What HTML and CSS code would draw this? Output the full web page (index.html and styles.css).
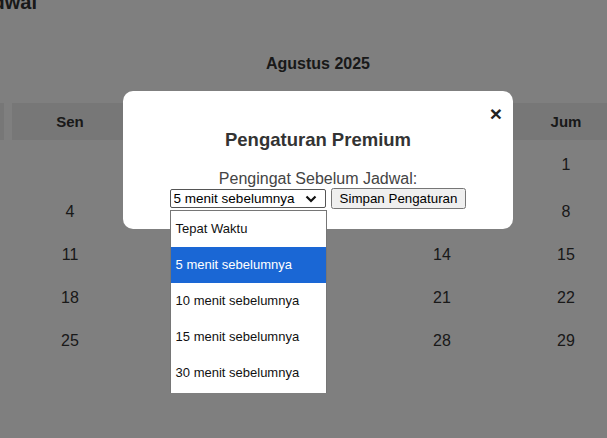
FILE: index.html
```html
<!DOCTYPE html>
<html lang="id">
<head>
    <meta charset="UTF-8">
    <meta name="viewport" content="width=device-width, initial-scale=1.0">
    <title>Aplikasi Jadwal</title>
    <link rel="stylesheet" href="styles.css">
</head>
<body>

<div class="page">
    <h1 class="app-title">Aplikasi Jadwal</h1>
    <h2 class="month-title">Agustus 2025</h2>

    <div class="calendar">
        <div class="day-name">Min</div>
        <div class="day-name">Sen</div>
        <div class="day-name">Sel</div>
        <div class="day-name">Rab</div>
        <div class="day-name">Kam</div>
        <div class="day-name">Jum</div>
        <div class="day-name">Sab</div>

        <div class="day"></div><div class="day"></div><div class="day"></div><div class="day"></div><div class="day"></div>
        <div class="day">1</div><div class="day">2</div>

        <div class="day">3</div><div class="day">4</div><div class="day">5</div><div class="day">6</div>
        <div class="day">7</div><div class="day">8</div><div class="day">9</div>

        <div class="day">10</div><div class="day">11</div><div class="day">12</div><div class="day">13</div>
        <div class="day">14</div><div class="day">15</div><div class="day">16</div>

        <div class="day">17</div><div class="day">18</div><div class="day">19</div><div class="day">20</div>
        <div class="day">21</div><div class="day">22</div><div class="day">23</div>

        <div class="day">24</div><div class="day">25</div><div class="day">26</div><div class="day">27</div>
        <div class="day">28</div><div class="day">29</div><div class="day">30</div>

        <div class="day">31</div>
    </div>
</div>

<!-- Premium settings modal -->
<div class="overlay">
    <div class="modal">
        <span class="close">&times;</span>
        <h3 class="modal-title">Pengaturan Premium</h3>
        <label class="field-label" for="reminder">Pengingat Sebelum Jadwal:</label>
        <div class="field-row">
            <div class="select-wrap">
                <select id="reminder" class="reminder-select">
                    <option value="0">Tepat Waktu</option>
                    <option value="5" selected>5 menit sebelumnya</option>
                    <option value="10">10 menit sebelumnya</option>
                    <option value="15">15 menit sebelumnya</option>
                    <option value="30">30 menit sebelumnya</option>
                </select>
                <svg class="chevron" width="12" height="8" viewBox="0 0 12 8">
                    <polyline points="1.5,1.5 6,6 10.5,1.5" fill="none" stroke="#111" stroke-width="2.2"/>
                </svg>
                <ul class="options">
                    <li>Tepat Waktu</li>
                    <li class="selected">5 menit sebelumnya</li>
                    <li>10 menit sebelumnya</li>
                    <li>15 menit sebelumnya</li>
                    <li>30 menit sebelumnya</li>
                </ul>
            </div>
            <button class="save-btn">Simpan Pengaturan</button>
        </div>
    </div>
</div>

</body>
</html>
```

FILE: styles.css
```css
body { margin: 0; overflow: hidden; font-family: "Liberation Sans", Arial, sans-serif; color: #333; background: #fff; }
.page { width: 868px; margin: -9px 0 0 -116px; padding: 0 4px; box-sizing: border-box; }
.app-title { font-size: 20px; line-height: 23px; margin: 0; color: #333; }
.month-title { font-size: 16px; line-height: 18px; margin: 41px 0 30px; text-align: center; color: #333; }
.calendar {
    display: grid; grid-template-columns: repeat(7, 116px); column-gap: 8px;
    grid-template-rows: 37px 50px 43px 43px 43px 43px 43px;
}
.day-name { background-color: #eee; font-weight: bold; font-size: 15px; display: flex; align-items: center; justify-content: center; }
.day { font-size: 16px; display: flex; align-items: center; justify-content: center; }

.overlay { position: fixed; inset: 0; background-color: rgba(0, 0, 0, 0.5); padding: 91px 0 0 123px; }
.modal { position: relative; width: 390px; box-sizing: border-box; background: #fff; border-radius: 10px; padding: 20px; text-align: center; }
.close { position: absolute; top: 11px; right: 11px; font-size: 21px; font-weight: bold; color: #222; cursor: pointer; }
.modal-title { font-size: 18.5px; line-height: 21px; margin: 18px 0 20px; color: #333; }
.field-label { display: block; font-size: 16px; line-height: 18px; color: #444; }
.field-row { display: flex; justify-content: center; align-items: center; gap: 5px; height: 21px; }
.select-wrap { position: relative; display: flex; }
.reminder-select {
    -webkit-appearance: none; appearance: none;
    width: 156px; height: 19px; box-sizing: border-box;
    font-family: "Liberation Sans", Arial, sans-serif; font-size: 13.5px; color: #000;
    padding: 0 3px; border: 1px solid #555; border-radius: 2px; background: #fff;
}
.chevron { position: absolute; right: 9px; top: 6px; pointer-events: none; }
.save-btn { font: 13.33px "Liberation Sans", Arial, sans-serif; padding: 1px 7px; height: 21px; color: #000; }
.options {
    position: absolute; top: 21px; left: 0; width: 157px; box-sizing: border-box;
    margin: 0; padding: 0 0 2px; list-style: none; background: #fff;
    border: 1px solid #767676; border-bottom: none; text-align: left;
}
.options li { height: 36px; line-height: 36px; padding-left: 5px; font-size: 13px; color: #111; }
.options li.selected { background-color: #1a67d5; color: #fff; }
```
